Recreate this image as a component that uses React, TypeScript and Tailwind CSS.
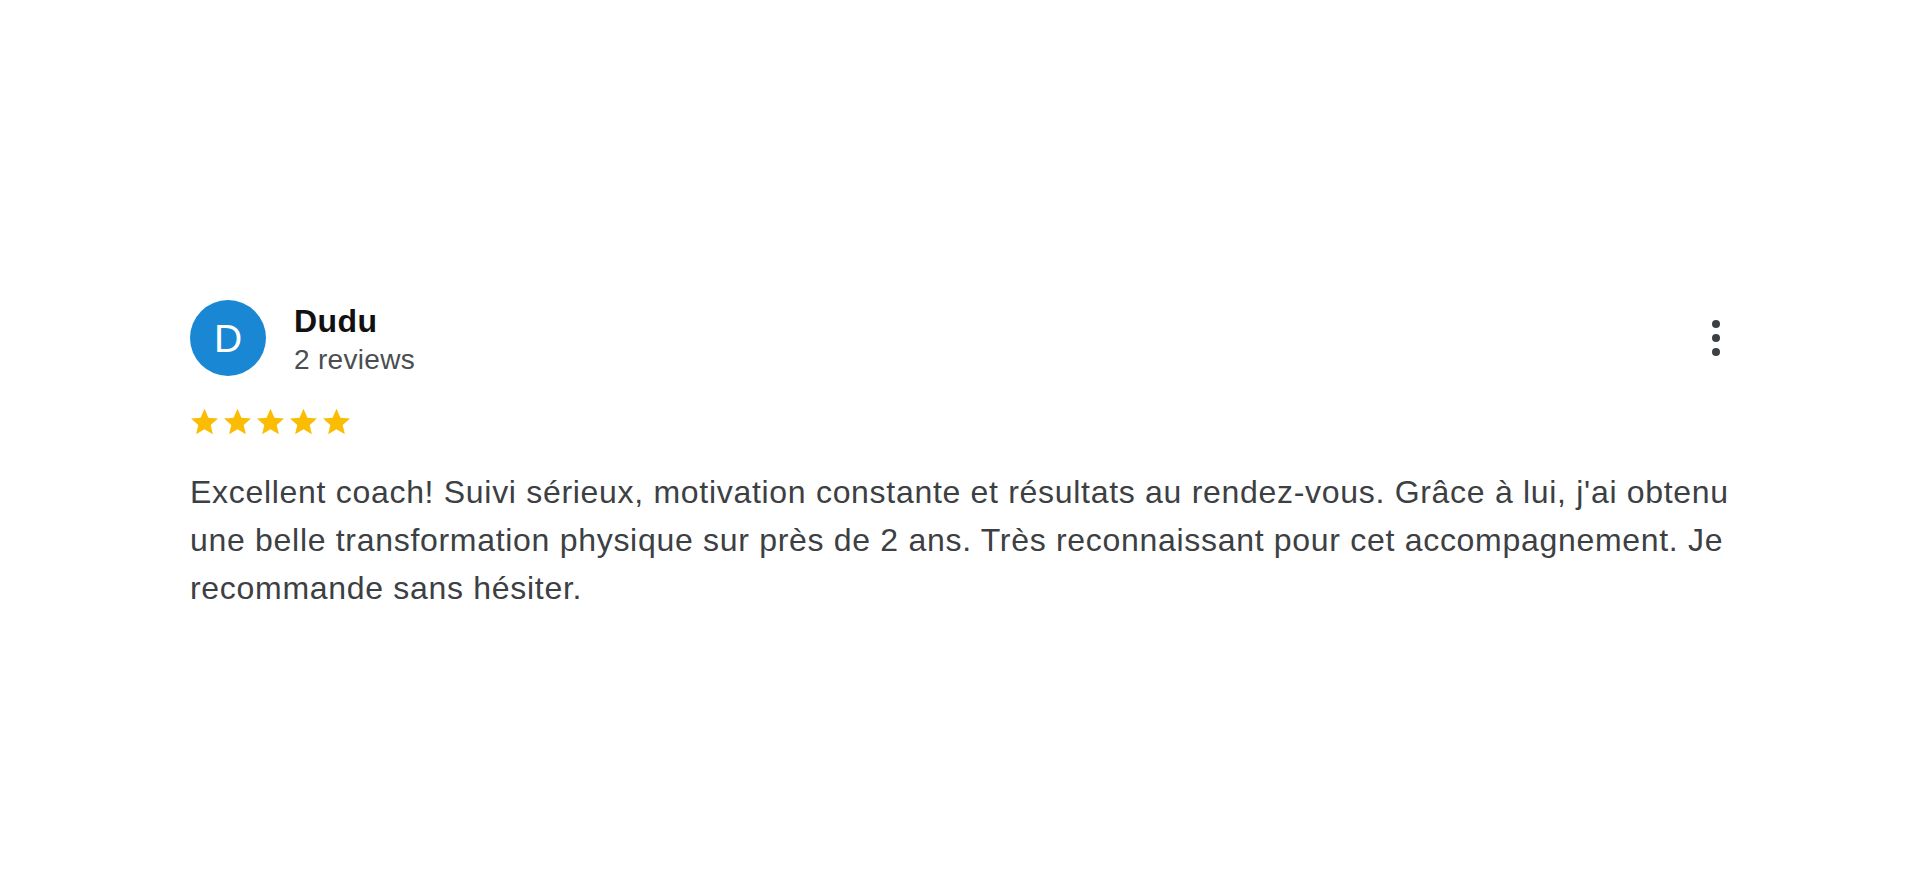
import React from "react";

function Star() {
  return (
    <svg viewBox="2 2.2 20 19.4" className="w-[27px] h-[27px]" fill="#fbbc04">
      <path d="M12 2.5l2.9 6.6 7.1.6-5.4 4.7 1.6 7-6.2-3.7-6.2 3.7 1.6-7L2 9.7l7.1-.6z" />
    </svg>
  );
}

export default function App() {
  return (
    <div
      className="min-h-screen bg-white pt-[300px] pl-[190px] pr-[180px]"
      style={{ fontFamily: '"Liberation Sans", Arial, sans-serif' }}
    >
      <div className="flex flex-col">
        {/* Header */}
        <div className="flex items-start">
          <div className="w-[76px] h-[76px] rounded-full bg-[#1a87d4] flex items-center justify-center text-white text-[39px] leading-none">
            D
          </div>
          <div className="ml-[28px] mt-[3px] flex flex-col">
            <span className="text-[32px] font-bold tracking-[0.4px] text-[#111] leading-[36px]">Dudu</span>
            <span className="mt-[4px] text-[28px] tracking-[0.3px] text-[#4a4d52] leading-[34px]">2 reviews</span>
          </div>
          <div className="ml-auto mr-[20px] mt-[20px] flex flex-col gap-[6px]">
            <span className="w-[8px] h-[8px] rounded-full bg-[#3c4043]" />
            <span className="w-[8px] h-[8px] rounded-full bg-[#3c4043]" />
            <span className="w-[8px] h-[8px] rounded-full bg-[#3c4043]" />
          </div>
        </div>

        {/* Rating */}
        <div className="flex gap-[6px] mt-[31px] ml-[1px]">
          <Star />
          <Star />
          <Star />
          <Star />
          <Star />
        </div>

        {/* Review text */}
        <p className="mt-[33px] text-[32px] leading-[48px] tracking-[0.7px] text-[#3c4043]">
          Excellent coach! Suivi sérieux, motivation constante et résultats au rendez-vous. Grâce à lui, j'ai obtenu une
          belle transformation physique sur près de 2 ans. Très reconnaissant pour cet accompagnement. Je recommande sans
          hésiter.
        </p>
      </div>
    </div>
  );
}
